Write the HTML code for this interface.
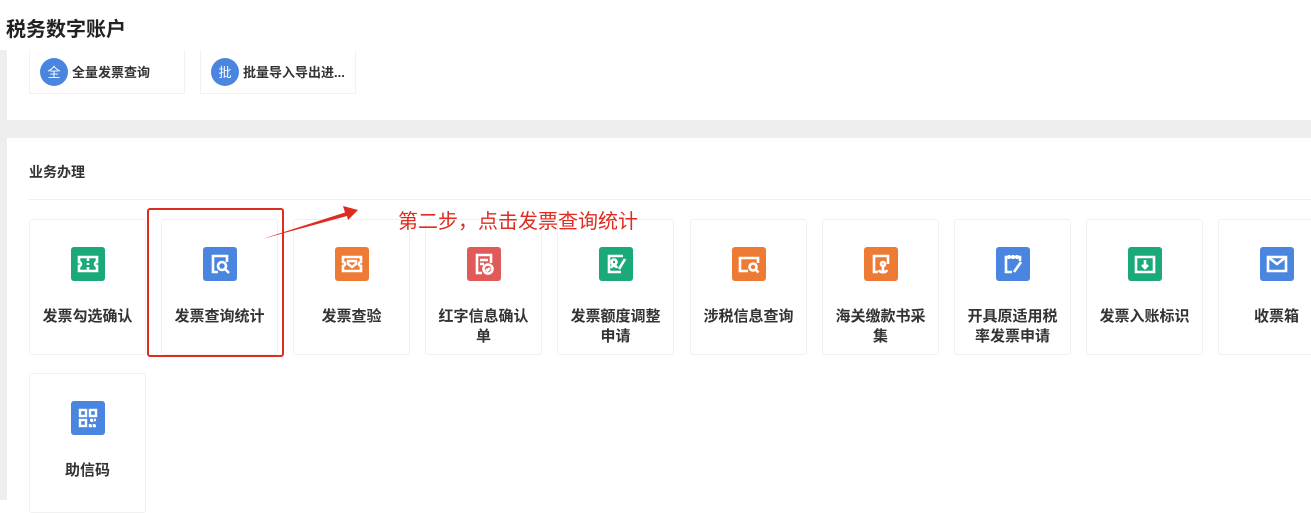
<!DOCTYPE html>
<html><head><meta charset="utf-8"><style>
*{margin:0;padding:0;box-sizing:border-box}
body{width:1311px;height:500px;background:#fff;position:relative;overflow:hidden;font-family:"Liberation Sans","Noto Sans CJK SC",sans-serif;color:#333}
.abs{position:absolute}
.title{left:6px;top:13px;font-size:20px;font-weight:bold;color:#222}
.qc{position:absolute;top:50px;height:44px;border:1px solid #f2f2f2;border-top:none;background:#fff;display:flex;align-items:center;font-size:13px;font-weight:bold;color:#333}
.qc i{font-style:normal;width:28px;height:28px;border-radius:50%;background:#4a86e0;color:#fff;font-weight:normal;font-size:13px;display:flex;align-items:center;justify-content:center;margin:0 4px 0 10px}
.card{position:absolute;width:117px;height:136px;border:1px solid #f0f0f0;border-radius:3px;background:#fff}
.card .ic{position:absolute;left:41px;top:27px;width:34px;height:34px;border-radius:3px}
.card .lb{position:absolute;left:0;right:0;top:87px;text-align:center;font-size:15px;font-weight:bold;line-height:20px;color:#333;padding:0 6px}
.g{background:#1aa97b}.b{background:#4a86e0}.o{background:#ee7b35}.r{background:#e05a5a}
.ic svg{width:34px;height:34px}
</style></head><body>
<div class="abs title">税务数字账户</div>
<div class="abs" style="left:0;top:50px;width:7px;height:450px;background:#eeeeee"></div>
<div class="abs" style="left:0;top:120px;width:1311px;height:18px;background:#eeeeee"></div>
<div class="qc" style="left:29px;width:156px"><i>全</i>全量发票查询</div>
<div class="qc" style="left:200px;width:156px"><i>批</i>批量导入导出进...</div>
<div class="abs" style="left:29px;top:162px;font-size:14px;font-weight:bold;color:#333">业务办理</div>
<div class="abs" style="left:29px;top:199px;width:1282px;height:1px;background:#eee"></div>

<div class="card" style="left:29px;top:219px"><div class="ic g"><svg viewBox="0 0 34 34" fill="none" stroke="#fff" stroke-width="2.6"><path d="M8 10h18v5a2 2 0 0 0 0 4v5H8v-5a2 2 0 0 0 0-4z"/><path d="M17 11v3M17 16v2M17 20v3"/></svg></div><div class="lb">发票勾选确认</div></div>
<div class="card" style="left:161px;top:219px"><div class="ic b"><svg viewBox="0 0 34 34" fill="none" stroke="#fff" stroke-width="2.6"><path d="M15 25H10V9h14v6"/><circle cx="19" cy="19" r="4"/><path d="M22 22l4 4"/></svg></div><div class="lb">发票查询统计</div></div>
<div class="card" style="left:293px;top:219px"><div class="ic o"><svg viewBox="0 0 34 34" fill="none" stroke="#fff" stroke-width="2.6"><path d="M8 10h18v5a2 2 0 0 0 0 4v5H8v-5a2 2 0 0 0 0-4z"/><path d="M13 14h8v3l-4 3-4-3z"/></svg></div><div class="lb">发票查验</div></div>
<div class="card" style="left:425px;top:219px"><div class="ic r"><svg viewBox="0 0 34 34" fill="none" stroke="#fff" stroke-width="2.6"><path d="M15 26H10V8h14v8"/><path d="M13 13h8M13 17h4"/><circle cx="21" cy="22" r="4.5"/><path d="M19 22l1.5 1.5 2.5-2.5"/></svg></div><div class="lb">红字信息确认单</div></div>
<div class="card" style="left:557px;top:219px"><div class="ic g"><svg viewBox="0 0 34 34" fill="none" stroke="#fff" stroke-width="2.6"><path d="M22 25H10V9h14"/><circle cx="15" cy="15" r="2.5"/><path d="M12 21c1-3 5-3 6 0"/><path d="M26 12l-6 10"/></svg></div><div class="lb">发票额度调整申请</div></div>
<div class="card" style="left:690px;top:219px"><div class="ic o"><svg viewBox="0 0 34 34" fill="none" stroke="#fff" stroke-width="2.6"><path d="M16 24H8V11h18v5"/><circle cx="21" cy="20" r="3.5"/><path d="M23.5 22.5l3 3"/></svg></div><div class="lb">涉税信息查询</div></div>
<div class="card" style="left:822px;top:219px"><div class="ic o"><svg viewBox="0 0 34 34" fill="none" stroke="#fff" stroke-width="2.6"><path d="M14 25h-4V9h14v8"/><circle cx="19" cy="17" r="2"/><path d="M19 19v7M15 23c1 3 7 3 8 0"/></svg></div><div class="lb">海关缴款书采集</div></div>
<div class="card" style="left:954px;top:219px"><div class="ic b"><svg viewBox="0 0 34 34" fill="none" stroke="#fff" stroke-width="2.6"><path d="M16 25h-6V10h14v4"/><path d="M13 8v4M17 8v4M21 8v4"/><path d="M25 15l-7 10"/></svg></div><div class="lb">开具原适用税率发票申请</div></div>
<div class="card" style="left:1086px;top:219px"><div class="ic g"><svg viewBox="0 0 34 34" fill="none" stroke="#fff" stroke-width="2.6"><path d="M8 10h18v15H8z"/><path d="M17 13v8M14 18l3 3 3-3"/></svg></div><div class="lb">发票入账标识</div></div>
<div class="card" style="left:1218px;top:219px"><div class="ic b"><svg viewBox="0 0 34 34" fill="none" stroke="#fff" stroke-width="2.6"><path d="M8 10h18v14H8z"/><path d="M8 10l9 7 9-7"/></svg></div><div class="lb">收票箱</div></div>
<div class="card" style="left:29px;top:373px;height:140px"><div class="ic b"><svg viewBox="0 0 34 34" fill="none" stroke="#fff" stroke-width="2.4"><rect x="9" y="9" width="6" height="6"/><rect x="19" y="9" width="6" height="6"/><rect x="9" y="19" width="6" height="6"/><path d="M19 19h2v2M23 19h2M19 23v2h2M23 23v2h2"/></svg></div><div class="lb">助信码</div></div>

<div class="abs" style="left:147px;top:208px;width:137px;height:149px;border:2.5px solid #e02b20;border-radius:3px"></div>
<svg class="abs" style="left:0;top:0" width="1311" height="500"><path d="M262 239 L345 212.5 L343 206 L358 210 L348 220 L347 216 Z" fill="#e02b20"/></svg>
<div class="abs" style="left:398px;top:205px;font-size:20px;color:#e02b20;white-space:nowrap">第二步，点击发票查询统计</div>
</body></html>
